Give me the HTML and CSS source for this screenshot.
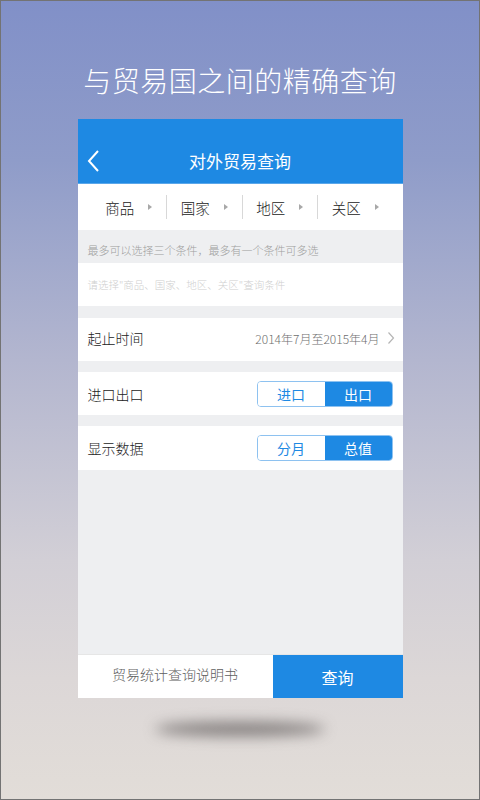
FILE: index.html
```html
<!DOCTYPE html>
<html>
<head>
<meta charset="utf-8">
<link rel="stylesheet" href="styles.css">
</head>
<body>
<div class="screen">
  <div class="headline">与贸易国之间的精确查询</div>
  <div class="phone">
    <div class="topbar">
      <svg class="back" width="14" height="24" viewBox="0 0 14 24"><path d="M11 2 L2 12 L11 22" fill="none" stroke="#fff" stroke-width="2"/></svg>
      <div class="title">对外贸易查询</div>
    </div>
    <div class="tabs">
      <div class="tab"><span>商品</span><i class="tri"></i></div>
      <div class="sep"></div>
      <div class="tab"><span>国家</span><i class="tri"></i></div>
      <div class="sep"></div>
      <div class="tab"><span>地区</span><i class="tri"></i></div>
      <div class="sep"></div>
      <div class="tab"><span>关区</span><i class="tri"></i></div>
    </div>
    <div class="hint">最多可以选择三个条件，最多有一个条件可多选</div>
    <div class="placeholder">请选择"商品、国家、地区、关区"查询条件</div>
    <div class="row r1">
      <span class="label">起止时间</span>
      <span class="value">2014年7月至2015年4月
        <svg class="chev" width="8" height="14" viewBox="0 0 8 14"><path d="M1.5 1.5 L6.5 7 L1.5 12.5" fill="none" stroke="#b5b5b5" stroke-width="1.2"/></svg>
      </span>
    </div>
    <div class="row r2">
      <span class="label">进口出口</span>
      <div class="seg"><span class="off">进口</span><span class="on">出口</span></div>
    </div>
    <div class="row r3">
      <span class="label">显示数据</span>
      <div class="seg"><span class="off">分月</span><span class="on">总值</span></div>
    </div>
    <div class="filler"></div>
    <div class="bottom">
      <div class="manual">贸易统计查询说明书</div>
      <div class="query">查询</div>
    </div>
  </div>
  <div class="shadow"></div>
</div>
</body>
</html>
```
FILE: styles.css
```css
html, body { margin: 0; padding: 0; }
body { font-family: "Noto Sans CJK SC", "Noto Sans", sans-serif; font-weight: 300; }
.screen {
  box-sizing: border-box;
  width: 480px; height: 800px;
  border: 1px solid #737373;
  background: linear-gradient(to bottom, #8190c8 0%, #8f9cc9 20%, #b3b6cf 45%, #d2cfd6 70%, #dcd7d7 85%, #e2ddd8 100%);
  display: flex; flex-direction: column; align-items: center;
  overflow: hidden;
}
.headline {
  margin-top: 59px;
  height: 40px; line-height: 40px;
  font-size: 28px; color: #fff; letter-spacing: 0.5px;
}
.phone {
  margin-top: 19px;
  width: 325px; height: 579px;
  background: #eeeff1;
  display: flex; flex-direction: column;
}
.topbar {
  height: 65px; background: #1e89e3;
  display: flex; align-items: center; justify-content: center;
  position: relative;
  border-bottom: 1px solid #5aa7ea;
  box-sizing: border-box;
}
.back { position: absolute; left: 9px; top: 30px; }
.title { color: #fff; font-size: 17px; margin-top: 19px; font-weight: 400; }
.tabs {
  height: 46px; background: #fff;
  display: flex; align-items: center;
  padding: 0 10px 0 14px;
}
.tab { flex: 1; display: flex; align-items: center; justify-content: center; gap: 14px; font-size: 14.5px; color: #222; }
.tri { width: 0; height: 0; border-left: 4px solid #a8a8a8; border-top: 3px solid transparent; border-bottom: 3px solid transparent; }
.sep { width: 1px; height: 24px; background: #d8d8d8; }
.hint {
  height: 33px; line-height: 40px;
  padding-left: 10px; font-size: 11px; color: #a0a0a0;
}
.placeholder {
  height: 43px; line-height: 43px; background: #fff;
  padding-left: 10px; font-size: 10.5px; color: #cfcfcf;
  margin-bottom: 12px;
}
.row {
  background: #fff; display: flex; align-items: center; justify-content: space-between;
  padding: 0 10px;
}
.r1 { height: 43px; margin-bottom: 11px; }
.r1 .label, .r1 .value { margin-top: -3px; }
.r2 { height: 43px; margin-bottom: 11px; }
.r3 { height: 44px; }
.label { font-size: 14px; color: #222; }
.value { font-size: 12px; color: #6e6e6e; display: flex; align-items: center; gap: 7px; margin-right: -2px; }
.seg {
  display: flex; width: 136px; height: 26px; box-sizing: border-box;
  border: 1px solid #8ec2f0; border-radius: 4px; overflow: hidden;
}
.seg span { flex: 1; display: flex; align-items: center; justify-content: center; font-size: 14px; font-weight: 400; }
.seg .off { color: #1e89e3; background: #fff; }
.seg .on { color: #fff; background: #1e89e3; }
.filler { flex: 1; }
.bottom { height: 43px; display: flex; border-top: 1px solid #e6e6e6; }
.manual { width: 195px; background: #fff; display: flex; justify-content: center; font-size: 14px; color: #5e5e5e; align-items: flex-start; padding-top: 9px; box-sizing: border-box; }
.query { flex: 1; background: #1e89e3; color: #fff; display: flex; align-items: center; justify-content: center; font-size: 16px; font-weight: 400; }
.shadow {
  margin-top: 24px;
  width: 170px; height: 14px; border-radius: 50%;
  background: rgba(70, 65, 65, 0.6);
  filter: blur(7px);
}
```
